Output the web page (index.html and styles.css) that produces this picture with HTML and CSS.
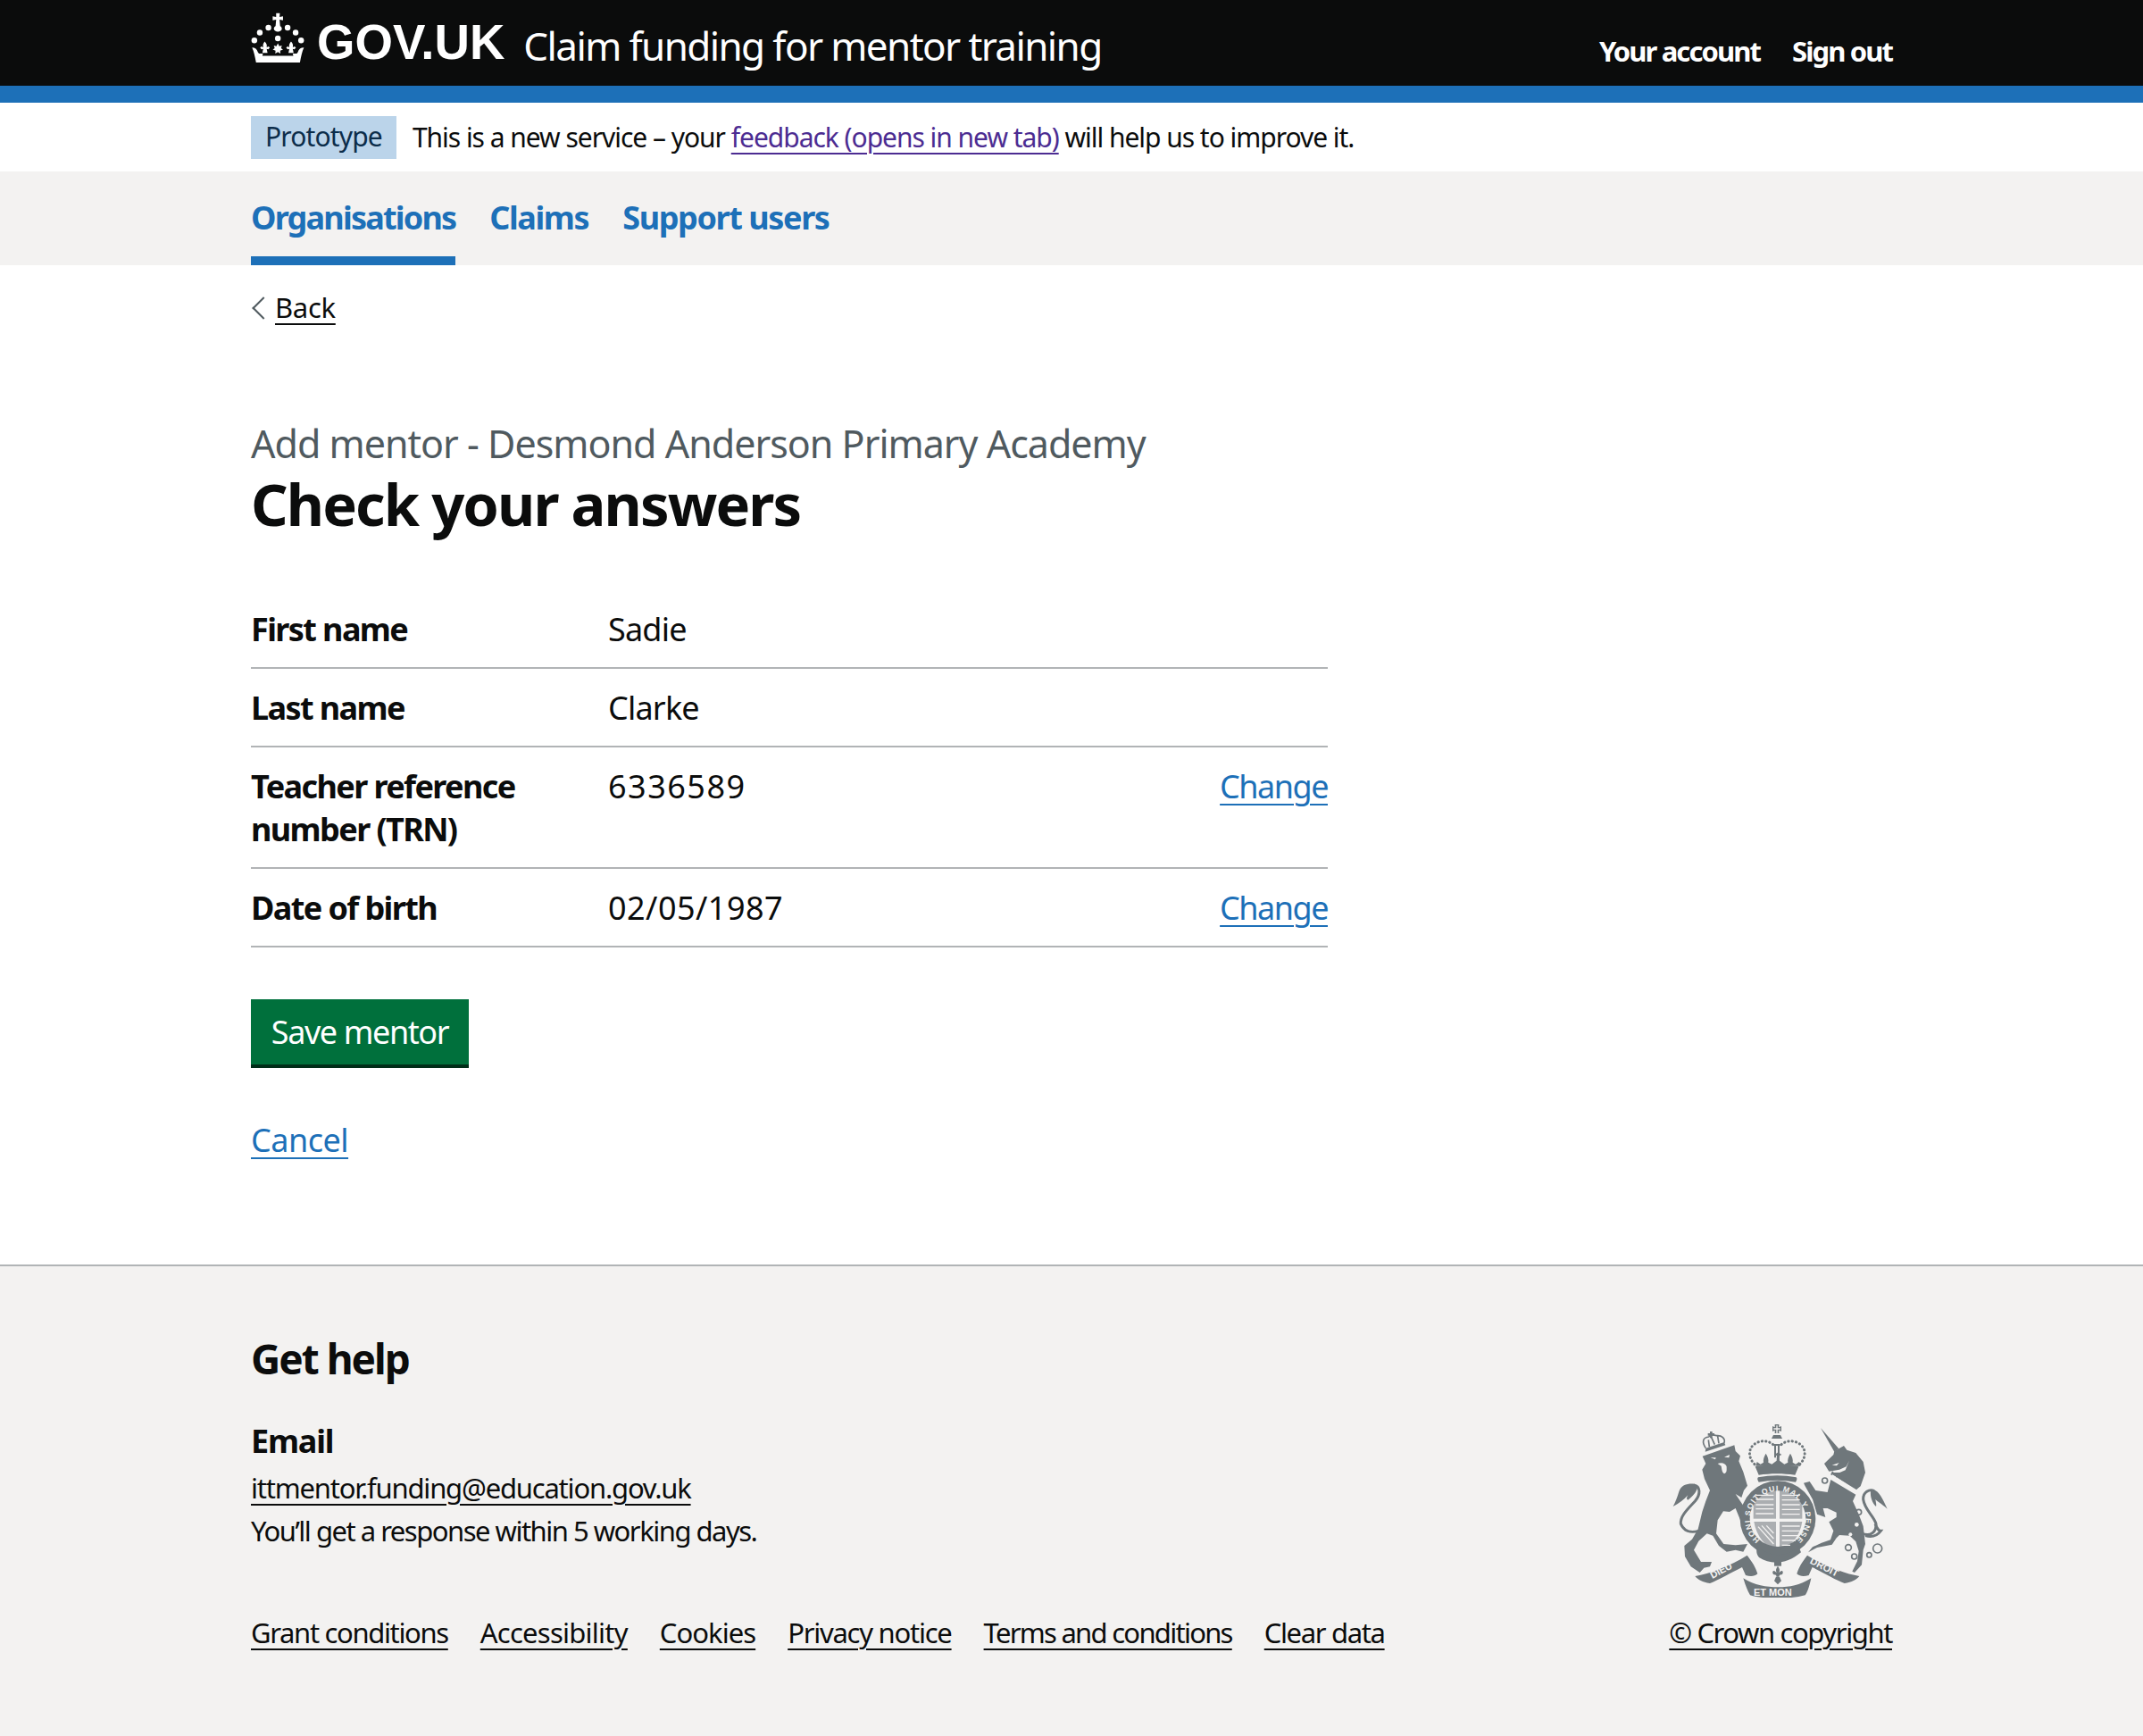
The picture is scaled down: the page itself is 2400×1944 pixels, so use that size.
FILE: index.html
```html
<!DOCTYPE html>
<html lang="en">
<head>
<meta charset="utf-8">
<title>Check your answers</title>
<link rel="stylesheet" href="styles.css">
</head>
<body>
<header class="top">
  <div class="container top-inner">
    <a class="logo" href="#">
      <svg class="crown" viewBox="30 20 190 180" aria-hidden="true">
        <g fill="#fff">
          <circle cx="42" cy="120" r="10"/><circle cx="61" cy="93" r="10"/><circle cx="91" cy="76" r="10"/>
          <circle cx="158" cy="76" r="10"/><circle cx="186" cy="93" r="10"/><circle cx="205" cy="120" r="10"/>
          <circle cx="124" cy="113" r="10"/>
          <path d="M118 25h13l-1 13 12-2v14l-12-2 2 22c4 2 6 6 6 10 0 6-7 10-14 10s-14-4-14-10c0-4 2-8 6-10l2-22-12 2V36l12 2z"/>
          <path d="M124 130l5 10 9-2-3 9 7 5-10 4 1 10-9-5-9 5 1-10-10-4 7-5-3-9 9 2z"/>
          <path d="M78 124c6 6 9 12 7 20l6-3 5 4-5 6-6-1 3 14h-18l3-14-6 1-5-6 5-4 6 3c-2-8 0-14 5-20z"/>
          <path d="M170 124c6 6 8 12 6 20l6-3 5 4-5 6-6-1 3 14h-18l3-14-6 1-5-6 5-4 6 3c-2-8 1-14 6-20z"/>
          <path d="M34 145c10 0 18 6 20 16l4 5h14l-2 8h108l-2-8h14l4-5c2-10 10-16 21-16-6 12-10 30-14 52H48c-4-22-8-40-14-52z"/>
        </g>
      </svg>
      <span class="logo-text">GOV.UK</span>
    </a>
    <a class="service" href="#">Claim funding for mentor training</a>
    <nav class="account">
      <a href="#">Your account</a>
      <a href="#">Sign out</a>
    </nav>
  </div>
</header>
<div class="blue-bar"></div>

<div class="container phase">
  <strong class="tag">Prototype</strong>
  <span class="phase-text">This is a new service – your <a class="visited" href="#">feedback (opens in new tab)</a> will help us to improve it.</span>
</div>

<nav class="primary">
  <ul class="container primary-list">
    <li class="current"><a href="#">Organisations</a></li>
    <li><a href="#">Claims</a></li>
    <li><a href="#">Support users</a></li>
  </ul>
</nav>

<div class="container">
  <a class="back" href="#">Back</a>
  <main class="main">
    <span class="caption">Add mentor - Desmond Anderson Primary Academy</span>
    <h1>Check your answers</h1>
    <dl class="summary">
      <div class="row"><dt>First name</dt><dd>Sadie</dd><dd class="action"></dd></div>
      <div class="row"><dt>Last name</dt><dd>Clarke</dd><dd class="action"></dd></div>
      <div class="row"><dt>Teacher reference number (TRN)</dt><dd class="trn">6336589</dd><dd class="action"><a href="#">Change</a></dd></div>
      <div class="row"><dt>Date of birth</dt><dd class="dob">02/05/1987</dd><dd class="action"><a href="#">Change</a></dd></div>
    </dl>
    <button class="btn" type="button">Save mentor</button>
    <p class="cancel"><a href="#">Cancel</a></p>
  </main>
</div>

<footer class="footer">
  <div class="container footer-inner">
    <div class="footer-left">
      <h2>Get help</h2>
      <h3>Email</h3>
      <p class="mail"><a href="#">ittmentor.funding@education.gov.uk</a></p>
      <p class="resp">You’ll get a response within 5 working days.</p>
      <ul class="meta">
        <li><a href="#">Grant conditions</a></li>
        <li><a href="#">Accessibility</a></li>
        <li><a href="#">Cookies</a></li>
        <li><a href="#">Privacy notice</a></li>
        <li><a href="#">Terms and conditions</a></li>
        <li><a href="#">Clear data</a></li>
      </ul>
    </div>
    <div class="footer-right">
      <svg class="arms" viewBox="0 0 750 600" aria-hidden="true">
        <defs>
          <path id="garter" d="M318 406A93 93 0 1 1 438 406"/>
          <g id="fleur">
            <path d="M0-24c6 8 8 14 4 22l8-6c6 0 7 6 3 12l-9 2-2 6H-4l-2-6-9-2c-4-6-3-12 3-12l8 6c-4-8-2-14 4-22z"/>
          </g>
        </defs>
        <g class="ink">
          <!-- lion -->
          <path d="M125 125L232 88L236 108L252 124L247 142L262 178L276 224L264 240L256 264L236 252L268 300L282 346L270 360L254 344L236 300L216 312L195 310L176 340L171 385L196 420L236 424L276 420L262 446L236 440L206 446L180 426L160 392L140 385L112 410L96 440L120 480L156 480L150 496L130 500L116 516L86 496L66 462L64 426L90 404L110 370L124 312L136 276L150 240L132 202L124 170L136 150Z"/>
          <path class="line" d="M112 376C84 384 62 376 52 352C50 326 74 304 100 276C120 252 118 226 96 222"/>
          <path d="M98 218C76 216 54 220 46 244C40 264 34 280 26 294C46 284 62 272 76 256C70 266 72 270 76 272C92 260 106 244 108 230Z"/>
          <!-- lion crown -->
          <path d="M134 110L202 88L198 78L136 98Z"/>
          <path class="thin" d="M136 98C122 78 126 62 146 60L155 52L172 56C190 54 202 66 198 80M155 62L166 86M176 58L180 82M145 70L148 94"/>
          <path d="M150 42h8v6h7v8h-7v8h-8v-8h-7v-8h7z"/>
          <!-- royal crown -->
          <path d="M368 18h14v10l8-4v18l-8-4v10h-14v-10l-8 4V24l8 4z"/>
          <path class="cut thin-cut" d="M375 22V50M364 33H386"/>
          <path d="M363 54h24l6 12h-36z"/>
          <path d="M366 90h6v40h-6zM378 90h6v40h-6zM364 84h22v6h-22z"/>
          <path d="M304 158l4-14 12 8 10-6c-2-10 2-20 8-30 6 10 10 20 8 30l12 6 16-12 1-16-8-4 12-8 12 8-8 4 1 16 16 12 12-6c-2-10 2-20 8-30 6 10 10 20 8 30l10 6 12-8 4 14z"/>
          <path d="M302 160C350 152 400 152 448 160L436 188C396 182 354 182 314 188Z"/>
          <path d="M312 196C356 188 396 188 440 196C444 200 442 206 438 212C396 204 356 204 314 212C310 206 308 200 312 196Z"/>
          <path class="dots" d="M300 152C278 130 278 100 300 84C320 70 350 70 368 92"/>
          <path class="dots" d="M452 152C474 130 474 100 452 84C432 70 402 70 384 92"/>
          <!-- garter -->
          <path fill-rule="evenodd" d="M378 208a127 127 0 1 1 0 254 127 127 0 1 1 0-254zM378 241a94 94 0 1 0 0 188 94 94 0 1 0 0-188z"/>
          <path d="M310 428C356 466 404 466 448 428L456 448C404 492 352 488 316 466C306 456 304 440 310 428Z"/>
          <!-- shield -->
          <path class="shield" d="M296 240H372V335H296Z"/>
          <path class="shield" d="M384 240H460V335H384Z"/>
          <path class="shield" d="M298 345H372V440C336 430 306 394 298 345Z"/>
          <path class="shield" d="M384 345H460C452 394 424 428 384 440Z"/>
          <path class="cut" d="M304 256H364M304 270H364M304 288H364M304 302H364M304 318H364"/>
          <path class="cut" d="M392 256H452M392 272H452M392 288H452M392 304H452M392 320H452"/>
          <path class="cut" d="M392 360H452M392 376H452M392 392H448M392 408H438M392 424H420"/>
          <path class="cut" d="M312 362L364 420M324 358L364 402M340 358L364 384"/>
          <!-- ribbons -->
          <path d="M100 528C150 520 215 495 275 458C292 480 305 500 310 520C300 530 285 530 270 525L258 498C215 520 180 540 150 552C125 548 110 540 100 528Z"/>
          <path d="M262 535C300 560 340 565 378 565C420 565 450 560 490 535C485 560 478 580 470 592C440 600 410 602 378 602C345 602 310 600 285 592C275 575 268 555 262 535Z"/>
          <path d="M652 528C602 520 537 495 477 458C460 480 447 500 442 520C452 530 467 530 482 525L494 498C537 520 572 540 602 552C627 548 642 540 652 528Z"/>
          <use href="#fleur" x="378" y="518"/>
          <path d="M366 480h24v14h-24z"/>
          <path d="M372 530h12l6 14-12 12-12-12z"/>
          <!-- unicorn -->
          <path d="M522 30L583 100L568 110Z"/>
          <path d="M568 108L600 90L610 104L640 114L665 144L672 180L656 226L646 234L640 240L558 184L565 180L586 180L605 172L618 140L608 160L585 170L550 176L534 150L565 120Z"/>
          <path d="M556 204L640 254L630 276L650 320L665 360L672 420L665 440L660 490L636 516L628 512L645 478L650 444L640 412L620 392L585 390L575 400L560 422L510 432L480 448L495 430L525 416L555 406L565 376L550 346L575 330L575 314L545 300L530 300L538 330L510 320L495 270L470 226L465 215L485 210L505 240L545 246Z"/>
          <path class="line" d="M660 384C690 398 710 378 708 352C700 324 670 306 665 270C664 246 686 234 702 242"/>
          <path d="M700 238C720 244 730 268 746 302C726 284 716 280 706 270C708 282 710 290 708 294C696 284 688 262 690 244Z"/>
          <path class="line" d="M705 352C712 368 716 376 724 376C712 392 694 398 672 392"/>
          <path class="crownband" d="M560 192L644 244"/>
          <path class="crownspikes" d="M558 188l4-8 6 6 6-2 2 8 8-4 2 8 8 0 2 8 8-2 4 8 8-2 2 8 8-2 6 10"/>
        </g>
        <g class="spots">
          <circle cx="643" cy="355" r="7"/><circle cx="622" cy="388" r="6"/>
          <path d="M198 128l18-8-2 10zM152 130l18 0-2 6zM176 150c14-6 28 0 30 10 0 12 2 20-8 24-8-6-8-16-10-26z"/>
          <path d="M560 155l24-8-8 10z"/>
        </g>
        <g class="rings">
          <circle cx="615" cy="432" r="10"/><circle cx="635" cy="462" r="9"/><circle cx="685" cy="457" r="8"/><circle cx="713" cy="435" r="15"/>
          <circle cx="536" cy="207" r="9"/><circle cx="650" cy="313" r="9"/><circle cx="523" cy="288" r="9"/>
        </g>
        <g class="arms-text">
          <text class="garter-text"><textPath href="#garter" textLength="452">HONI SOIT QUI MAL Y PENSE</textPath></text>
          <text class="motto" x="158" y="537" transform="rotate(-28 158 537)">DIEU</text>
          <text class="motto" x="297" y="594">ET MON</text>
          <text class="motto" x="484" y="484" transform="rotate(27 484 484)">DROIT</text>
        </g>
      </svg>
      <a class="copy" href="#">© Crown copyright</a>
    </div>
  </div>
</footer>
</body>
</html>
```
FILE: styles.css
```css
* { box-sizing: border-box; }
html, body { margin: 0; padding: 0; }
body {
  background: #fff;
  color: #0b0c0c;
  font-family: "Noto Sans", "Liberation Sans", sans-serif;
  font-size: 36px;
  line-height: 48px;
  min-height: 1944px;
  display: flex;
  flex-direction: column;
}
a { color: inherit; text-underline-offset: 6px; text-decoration-thickness: 2px; }
p, h1, h2, h3, ul, dl, dd { margin: 0; padding: 0; }
ul { list-style: none; }

.container { width: 1838px; margin-left: auto; margin-right: auto; }

.top { background: #0b0c0c; color: #fff; height: 96px; }
.top a { color: #fff; text-decoration: none; }
.top-inner { display: flex; align-items: flex-start; height: 96px; }
.logo { display: flex; align-items: flex-start; height: 96px; gap: 13px; }
.crown { width: 61px; height: 58px; display: block; margin-top: 13px; }
.logo-text { font-family: "Liberation Sans", sans-serif; font-weight: 700; font-size: 54.6px; line-height: 96px; }
.service { font-size: 44px; line-height: 84px; margin-left: 21px; letter-spacing: -1.6px; padding-top: 9px; }
.account { margin-left: auto; display: flex; gap: 36px; font-size: 31px; font-weight: 700; line-height: 42px; padding-top: 36px; letter-spacing: -1.9px; }
.blue-bar { height: 19px; background: #1d70b8; }

.phase { display: flex; align-items: center; height: 77px; gap: 18px; font-size: 30px; line-height: 40px; }
.tag { background: #bbd4ea; color: #0c2d4a; font-weight: 400; height: 48px; line-height: 46px; padding: 0 16px; letter-spacing: -.85px; }
.phase-text { letter-spacing: -1.03px; }
.visited { color: #4c2c92; }

.primary { background: #f3f2f1; height: 105px; }
.primary-list { display: flex; gap: 38px; height: 105px; }
.primary-list li { height: 105px; font-size: 36px; font-weight: 700; line-height: 48px; padding-top: 28px; letter-spacing: -1.4px; }
.primary-list a { color: #1d70b8; text-decoration: none; }
.primary-list .current { border-bottom: 10px solid #1d70b8; letter-spacing: -1.8px; }

.back { display: inline-block; position: relative; margin-top: 26px; padding-left: 27px; font-size: 31px; line-height: 42px; letter-spacing: -.3px; }
.back::before {
  content: ""; position: absolute; left: 5px; top: 13px; width: 16px; height: 16px;
  border-left: 2px solid #505a5f; border-bottom: 2px solid #505a5f; transform: rotate(45deg);
}

.main { padding-top: 103px; width: 1206px; }
.caption { display: block; color: #505a5f; font-size: 43px; line-height: 54px; letter-spacing: -1px; }
h1 { font-size: 65px; line-height: 80px; font-weight: 700; letter-spacing: -1.9px; margin-bottom: 57px; }

.summary { margin-bottom: 58px; }
.row { display: flex; padding: 20px 0 18px; border-bottom: 2px solid #b1b4b6; }
.row dt { width: 400px; font-weight: 700; padding-right: 20px; letter-spacing: -1.6px; }
.row dd { flex: 1; letter-spacing: -.8px; }
.row .trn { letter-spacing: 1.5px; }
.row .dob { letter-spacing: .45px; }
.row .action { flex: 0 0 200px; text-align: right; letter-spacing: -1.5px; }
.row a, .cancel a { color: #1d70b8; }

.btn {
  display: block; width: 244px; height: 77px; padding: 0; border: 0; border-bottom: 4px solid #002d18;
  background: #00703c; color: #fff; font: 400 36px/48px "Noto Sans", sans-serif; letter-spacing: -1.4px;
  border-radius: 0;
}
.cancel { margin-top: 57px; letter-spacing: -.5px; }

.footer { flex: 1; margin-top: 115px; background: #f3f2f1; border-top: 2px solid #b1b4b6; }
.footer-inner { display: flex; justify-content: space-between; padding-top: 75px; }
.footer h2 { font-size: 46px; line-height: 56px; font-weight: 700; letter-spacing: -2px; margin-bottom: 41px; }
.footer h3 { font-size: 36px; line-height: 48px; font-weight: 700; margin-bottom: 4px; letter-spacing: -1.2px; }
.mail { font-size: 31px; line-height: 48px; letter-spacing: -1.2px; }
.resp { font-size: 31px; line-height: 48px; letter-spacing: -1.5px; }
.meta { display: flex; gap: 36px; margin-top: 66px; font-size: 31px; line-height: 48px; letter-spacing: -1.35px; }
.meta li:nth-child(2) { letter-spacing: -.75px; }
.meta li:nth-child(3) { letter-spacing: -.95px; }
.meta li:nth-child(4) { letter-spacing: -1.25px; }
.meta li:nth-child(5) { letter-spacing: -1.73px; }
.footer-right { display: flex; flex-direction: column; align-items: flex-end; padding-top: 96px; }
.arms { width: 250px; height: 200px; display: block; margin-right: 4px; margin-bottom: 15px; }
.copy { font-size: 31px; line-height: 48px; letter-spacing: -1.4px; }

.ink { fill: #6f777b; }
.line { fill: none; stroke: #6f777b; stroke-width: 9; }
.thin { fill: none; stroke: #6f777b; stroke-width: 5; }
.dots { fill: none; stroke: #6f777b; stroke-width: 9; stroke-dasharray: 1 12; stroke-linecap: round; }
.shield { fill: #6f777b; fill-opacity: .55; }
.cut { fill: none; stroke: #f3f2f1; stroke-width: 4; }
.crownband { fill: none; stroke: #f3f2f1; stroke-width: 9; }
.crownspikes { fill: none; stroke: #6f777b; stroke-width: 6; }
.spots { fill: #f3f2f1; }
.rings { fill: none; stroke: #6f777b; stroke-width: 5; }
.arms-text text { fill: #f3f2f1; font-family: "Liberation Sans", sans-serif; font-weight: 700; }
.arms-text .garter-text { font-size: 26px; }
.arms-text .motto { font-size: 33px; }
```
